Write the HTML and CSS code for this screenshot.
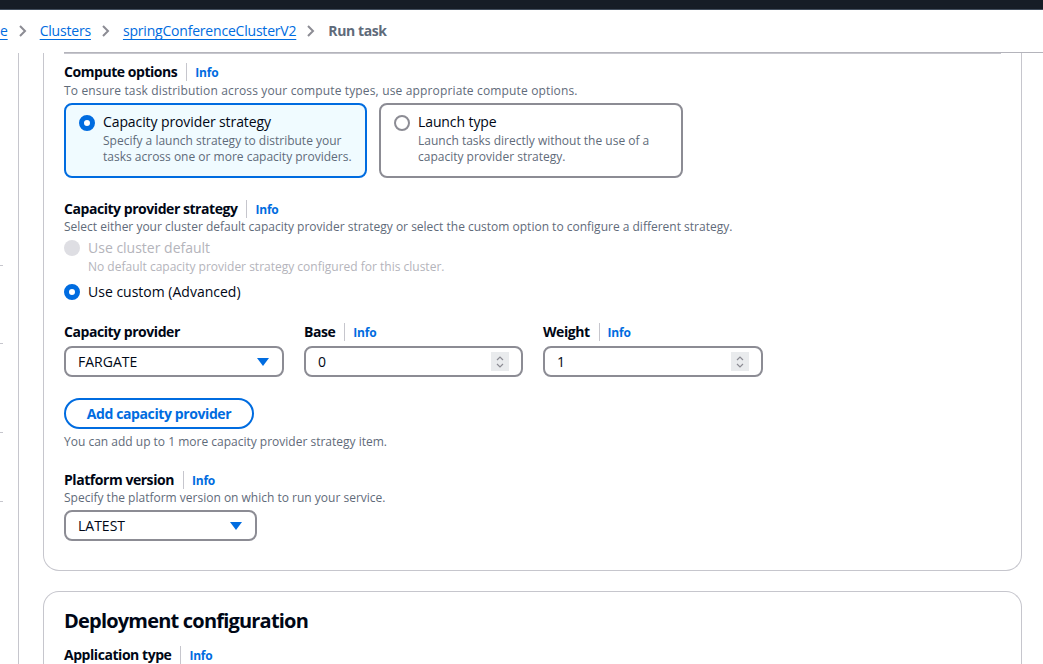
FILE: index.html
```html
<!DOCTYPE html>
<html lang="en">
<head>
<meta charset="utf-8">
<title>Run task</title>
<link rel="stylesheet" href="styles.css">
</head>
<body>
<div class="topbar"></div>
<nav class="crumbs">
  <a class="crumb-link" href="#">e</a>
  <svg class="chev" viewBox="0 0 16 16"><path d="M6 3l5 5-5 5"/></svg>
  <a class="crumb-link" href="#">Clusters</a>
  <svg class="chev" viewBox="0 0 16 16"><path d="M6 3l5 5-5 5"/></svg>
  <a class="crumb-link" href="#">springConferenceClusterV2</a>
  <svg class="chev" viewBox="0 0 16 16"><path d="M6 3l5 5-5 5"/></svg>
  <span class="crumb-current">Run task</span>
</nav>
<div class="header-rule"></div>
<div class="layout">
  <aside class="rail">
    <span class="tick t1"></span>
    <span class="tick t2"></span>
    <span class="tick t3"></span>
    <span class="tick t4"></span>
  </aside>
  <main class="main">
    <section class="card card-open">
      <div class="divider"></div>

      <div class="label-row mt8"><span class="label">Compute options</span><span class="sep"></span><a class="info" href="#">Info</a></div>
      <div class="desc wide mt1">To ensure task distribution across your compute types, use appropriate compute options.</div>

      <div class="tiles">
        <div class="tile tile-on">
          <span class="radio radio-on"></span>
          <div>
            <div class="tile-title">Capacity provider strategy</div>
            <div class="desc">Specify a launch strategy to distribute your tasks across one or more capacity providers.</div>
          </div>
        </div>
        <div class="tile">
          <span class="radio"></span>
          <div>
            <div class="tile-title">Launch type</div>
            <div class="desc">Launch tasks directly without the use of a capacity provider strategy.</div>
          </div>
        </div>
      </div>

      <div class="label-row mt21"><span class="label">Capacity provider strategy</span><span class="sep"></span><a class="info" href="#">Info</a></div>
      <div class="desc">Select either your cluster default capacity provider strategy or select the custom option to configure a different strategy.</div>

      <div class="radio-group">
        <div class="radio-item disabled">
          <span class="radio radio-disabled"></span>
          <div>
            <div class="radio-label">Use cluster default</div>
            <div class="desc">No default capacity provider strategy configured for this cluster.</div>
          </div>
        </div>
        <div class="radio-item">
          <span class="radio radio-on"></span>
          <div class="radio-label">Use custom (Advanced)</div>
        </div>
      </div>

      <div class="fields">
        <div class="field">
          <div class="label-row"><span class="label">Capacity provider</span></div>
          <div class="select"><span>FARGATE</span><svg class="caret" viewBox="0 0 12 8"><path d="M0 0h12L6 8z"/></svg></div>
        </div>
        <div class="field">
          <div class="label-row"><span class="label">Base</span><span class="sep"></span><a class="info" href="#">Info</a></div>
          <div class="input"><span>0</span><span class="spin"><svg viewBox="0 0 10 16"><path d="M2 6l3-3 3 3M2 10l3 3 3-3"/></svg></span></div>
        </div>
        <div class="field">
          <div class="label-row"><span class="label">Weight</span><span class="sep"></span><a class="info" href="#">Info</a></div>
          <div class="input"><span>1</span><span class="spin"><svg viewBox="0 0 10 16"><path d="M2 6l3-3 3 3M2 10l3 3 3-3"/></svg></span></div>
        </div>
      </div>

      <button class="btn" type="button">Add capacity provider</button>
      <div class="desc mt5">You can add up to 1 more capacity provider strategy item.</div>

      <div class="label-row mt20"><span class="label">Platform version</span><span class="sep"></span><a class="info" href="#">Info</a></div>
      <div class="desc">Specify the platform version on which to run your service.</div>
      <div class="select select-narrow mt4"><span>LATEST</span><svg class="caret" viewBox="0 0 12 8"><path d="M0 0h12L6 8z"/></svg></div>
    </section>

    <section class="card card-next">
      <h2 class="card-title">Deployment configuration</h2>
      <div class="label-row mt12"><span class="label">Application type</span><span class="sep"></span><a class="info" href="#">Info</a></div>
    </section>
  </main>
</div>
</body>
</html>
```

FILE: styles.css
```css
* { box-sizing: border-box; }
html, body { margin: 0; padding: 0; }
body {
  font-family: "Open Sans", "Noto Sans", "Liberation Sans", sans-serif;
  color: #000716;
  background: #ffffff;
  width: 1043px;
  height: 664px;
  overflow: hidden;
}

.topbar {
  height: 10px;
  background: #161d26;
  border-bottom: 1px solid #414d5c;
}

.crumbs {
  height: 42px;
  display: flex;
  align-items: center;
  font-size: 14px;
  line-height: 20px;
  letter-spacing: -0.2px;
}
.crumb-link {
  color: #006ce0;
  text-decoration: underline;
  text-underline-offset: 3px;
}
.chev {
  width: 16px;
  height: 16px;
  margin: 0 10px 0 6px;
  fill: none;
  stroke: #8c8c94;
  stroke-width: 2;
}
.crumb-current {
  color: #5f6b7a;
  font-weight: 700;
  letter-spacing: -0.4px;
}

.header-rule {
  height: 1px;
  margin-left: 64px;
  background: #b4b4bb;
}

.layout {
  display: flex;
  height: 700px;
}
.rail {
  width: 19px;
  flex: none;
  border-right: 1px solid #c6c6cd;
  display: flex;
  flex-direction: column;
}
.tick {
  display: block;
  width: 3px;
  height: 1px;
  background: #c6c6cd;
}
.t1 { margin-top: 212px; }
.t2 { margin-top: 77px; }
.t3 { margin-top: 88px; }
.t4 { margin-top: 68px; }

.main {
  flex: none;
  width: 1003px;
  padding-left: 24px;
}

.card {
  width: 979px;
  border: 1px solid #c6c6cd;
  background: #fff;
  padding: 0 20px;
}
.card-open {
  border-top: none;
  border-radius: 0 0 16px 16px;
  padding-bottom: 29px;
}
.card-next {
  margin-top: 20px;
  border-bottom: none;
  border-radius: 16px 16px 0 0;
  padding-top: 17px;
  height: 100px;
}

.divider {
  height: 1px;
  background: #c6c6cd;
}

.label-row {
  display: flex;
  align-items: center;
  height: 20px;
}
.label {
  font-size: 14px;
  line-height: 20px;
  font-weight: 700;
  letter-spacing: -0.45px;
}
.sep {
  width: 1px;
  height: 18px;
  background: #c6c6cd;
  margin: 0 8px 0 9px;
}
.info {
  font-size: 12px;
  font-weight: 700;
  color: #006ce0;
  text-decoration: none;
  letter-spacing: -0.2px;
}
.desc {
  font-size: 12px;
  line-height: 16px;
  color: #5f6b7a;
}
.desc.wide { letter-spacing: 0.15px; }

.mt1 { margin-top: 1px; }
.mt4 { margin-top: 4px; }
.mt5 { margin-top: 5px; }
.mt8 { margin-top: 8px; }
.mt12 { margin-top: 12px; }
.mt20 { margin-top: 20px; }
.mt21 { margin-top: 21px; }

.tiles {
  display: grid;
  grid-template-columns: 303px 304px;
  column-gap: 12px;
  margin-top: 4px;
}
.tile {
  height: 75px;
  border: 2px solid #8c8c94;
  border-radius: 8px;
  padding: 7px 12px 0 13px;
  display: flex;
  gap: 8px;
}
.tile-on {
  border-color: #006ce0;
  background: #f0fbff;
}
.tile .radio { margin-top: 3px; }
.tile-title {
  font-size: 14px;
  line-height: 20px;
  margin-bottom: 1px;
  letter-spacing: -0.1px;
}

.radio {
  flex: none;
  width: 16px;
  height: 16px;
  border-radius: 50%;
  border: 2px solid #8c8c94;
  background: #fff;
}
.radio-on {
  border: 5px solid #006ce0;
  background: #fff;
}
.radio-disabled {
  border: none;
  background: #dedee3;
}

.radio-group {
  margin-top: 3px;
  display: flex;
  flex-direction: column;
  gap: 7px;
}
.radio-item {
  display: flex;
  gap: 8px;
}
.radio-item .radio { margin-top: 2px; }
.radio-label {
  font-size: 14px;
  line-height: 20px;
}
.radio-item .desc { margin-top: 1px; }
.disabled .radio-label,
.disabled .desc {
  color: #b4b4bb;
}

.fields {
  display: grid;
  grid-template-columns: 220px 219px 220px;
  column-gap: 20px;
  margin-top: 20px;
}
.field .label-row { margin-bottom: 4px; }

.select,
.input {
  height: 31px;
  border: 2px solid #8c8c94;
  border-radius: 8px;
  display: flex;
  align-items: center;
  justify-content: space-between;
  padding: 0 13px 0 12px;
  font-size: 14px;
  line-height: 20px;
}
.select-narrow { width: 193px; }
.caret {
  width: 12px;
  height: 8px;
  fill: #006ce0;
}
.input { padding-right: 12px; }
.spin {
  width: 18px;
  height: 19px;
  background: #e9ebed;
  display: flex;
  align-items: center;
  justify-content: center;
}
.spin svg {
  width: 10px;
  height: 16px;
  fill: none;
  stroke: #8c8c94;
  stroke-width: 1.2;
}

.btn {
  display: block;
  margin-top: 21px;
  height: 31px;
  width: 190px;
  border: 2px solid #006ce0;
  border-radius: 20px;
  background: #fff;
  color: #006ce0;
  font-family: inherit;
  font-size: 14px;
  font-weight: 700;
  line-height: 20px;
  letter-spacing: -0.4px;
  padding: 0;
}

.card-title {
  margin: 0;
  font-size: 20px;
  line-height: 24px;
  font-weight: 700;
  letter-spacing: -0.8px;
}
```
